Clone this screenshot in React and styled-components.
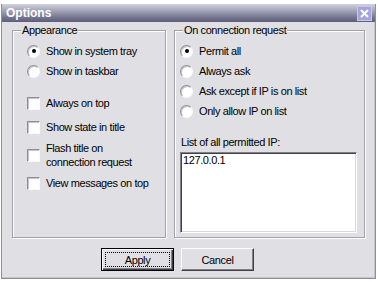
import React from "react";
import styled, { createGlobalStyle } from "styled-components";

const Global = createGlobalStyle`
  html, body { margin: 0; padding: 0; background: #ffffff; }
  body { font-family: "Liberation Sans", Arial, sans-serif; }
`;

const FACE = "#e0dfe3";

const Window = styled.div`
  box-sizing: border-box;
  margin: 4px 0 0 1px;
  width: 375px;
  height: 275px;
  background: ${FACE};
  border: 1px solid #8e8e9a;
  border-top: none;
  box-shadow: inset -1px -1px 0 #c4c4cc;
  display: flex;
  flex-direction: column;
  font-family: "Liberation Sans", Arial, sans-serif;
  font-size: 11px;
  letter-spacing: -0.4px;
  color: #000;
`;

const TitleBar = styled.div`
  height: 18px;
  flex: none;
  display: flex;
  align-items: center;
  justify-content: space-between;
  padding: 0 3px 0 4px;
  background: linear-gradient(#d2d2de 0%, #a6a6bc 35%, #74748f 75%, #5e5e7a 100%);
`;

const Title = styled.span`
  color: #fff;
  font-weight: bold;
  font-size: 12px;
  letter-spacing: 0;
`;

const CloseButton = styled.div`
  box-sizing: border-box;
  width: 15px;
  height: 15px;
  background: #a4a4dc;
  border: 1px solid #c8c8ee;
  display: flex;
  align-items: center;
  justify-content: center;
`;

const GroupRow = styled.div`
  display: flex;
  gap: 8px;
  padding: 8px 0 0 10px;
`;

const GroupBox = styled.div`
  position: relative;
  box-sizing: border-box;
  width: ${(p) => p.$w}px;
  border: 1px solid #a2a2aa;
  box-shadow: inset 1px 1px 0 #fff, 1px 1px 0 #fff;
  display: flex;
  flex-direction: column;
  align-items: flex-start;
  padding: 13px 0 4px ${(p) => p.$pl}px;
`;

const Caption = styled.span`
  position: absolute;
  top: -8px;
  left: 8px;
  padding: 0 1px;
  line-height: 14px;
  background: ${FACE};
`;

const Option = styled.label`
  display: flex;
  align-items: center;
  gap: 6px;
  line-height: 14px;
  margin-top: ${(p) => p.$mt || 0}px;
`;

const Radio = styled.input.attrs({ type: "radio", readOnly: true })`
  appearance: none;
  margin: 0;
  box-sizing: border-box;
  width: 13px;
  height: 13px;
  border-radius: 50%;
  background: #fff;
  border: 1px solid;
  border-color: #8e8e96 #fafafa #fafafa #8e8e96;
  box-shadow: inset 1px 1px 0 #c4c4ca;
  display: grid;
  place-items: center;
  flex: none;
  &:checked::after {
    content: "";
    width: 4px;
    height: 4px;
    border-radius: 50%;
    background: #000;
  }
`;

const Check = styled.input.attrs({ type: "checkbox", readOnly: true })`
  appearance: none;
  margin: 0;
  box-sizing: border-box;
  width: 13px;
  height: 13px;
  background: #fff;
  border: 1px solid;
  border-color: #8e8e96 #fafafa #fafafa #8e8e96;
  box-shadow: inset 1px 1px 0 #c4c4ca;
  flex: none;
`;

const FieldLabel = styled.div`
  line-height: 14px;
  margin: 17px 0 0 1px;
`;

const IpList = styled.textarea`
  box-sizing: border-box;
  width: 177px;
  height: 81px;
  margin: 3px 0 0;
  padding: 1px 2px;
  resize: none;
  overflow: hidden;
  background: #fff;
  border: 1px solid;
  border-color: #808088 #fff #fff #808088;
  box-shadow: inset 1px 1px 0 #404048, inset -1px -1px 0 #d8d8dc;
  font: inherit;
  letter-spacing: inherit;
  line-height: 13px;
  color: #000;
  outline: none;
`;

const ButtonRow = styled.div`
  display: flex;
  gap: 7px;
  padding: 10px 0 0 99px;
`;

const Button = styled.button`
  position: relative;
  box-sizing: border-box;
  width: 73px;
  height: 23px;
  margin: 0;
  padding: 0;
  background: ${FACE};
  font: inherit;
  letter-spacing: inherit;
  color: #000;
  border: 1px solid;
  border-color: ${(p) =>
    p.$default ? "#000" : "#fff #404048 #404048 #fff"};
  box-shadow: ${(p) =>
    p.$default
      ? "inset 1px 1px 0 #fff, inset -1px -1px 0 #404048, inset -2px -2px 0 #808088"
      : "inset -1px -1px 0 #808088"};
  &::after {
    content: "";
    display: ${(p) => (p.$default ? "block" : "none")};
    position: absolute;
    inset: 3px;
    border: 1px dotted #000;
  }
`;

export default function App() {
  return (
    <>
      <Global />
      <Window>
        <TitleBar>
          <Title>Options</Title>
          <CloseButton>
            <svg width="9" height="9" viewBox="0 0 9 9">
              <path d="M1 1 L8 8 M8 1 L1 8" stroke="#fff" strokeWidth="2" />
            </svg>
          </CloseButton>
        </TitleBar>
        <GroupRow>
          <GroupBox $w={154} $pl={14}>
            <Caption>Appearance</Caption>
            <Option>
              <Radio name="show" defaultChecked />
              Show in system tray
            </Option>
            <Option $mt={6}>
              <Radio name="show" />
              Show in taskbar
            </Option>
            <Option $mt={18}>
              <Check />
              Always on top
            </Option>
            <Option $mt={10}>
              <Check />
              Show state in title
            </Option>
            <Option $mt={7}>
              <Check />
              <span>
                Flash title on
                <br />
                connection request
              </span>
            </Option>
            <Option $mt={7}>
              <Check />
              View messages on top
            </Option>
          </GroupBox>
          <GroupBox $w={191} $pl={5}>
            <Caption>On connection request</Caption>
            <Option>
              <Radio name="conn" defaultChecked />
              Permit all
            </Option>
            <Option $mt={6}>
              <Radio name="conn" />
              Always ask
            </Option>
            <Option $mt={6}>
              <Radio name="conn" />
              Ask except if IP is on list
            </Option>
            <Option $mt={6}>
              <Radio name="conn" />
              Only allow IP on list
            </Option>
            <FieldLabel>List of all permitted IP:</FieldLabel>
            <IpList defaultValue="127.0.0.1" />
          </GroupBox>
        </GroupRow>
        <ButtonRow>
          <Button $default>Apply</Button>
          <Button>Cancel</Button>
        </ButtonRow>
      </Window>
    </>
  );
}
